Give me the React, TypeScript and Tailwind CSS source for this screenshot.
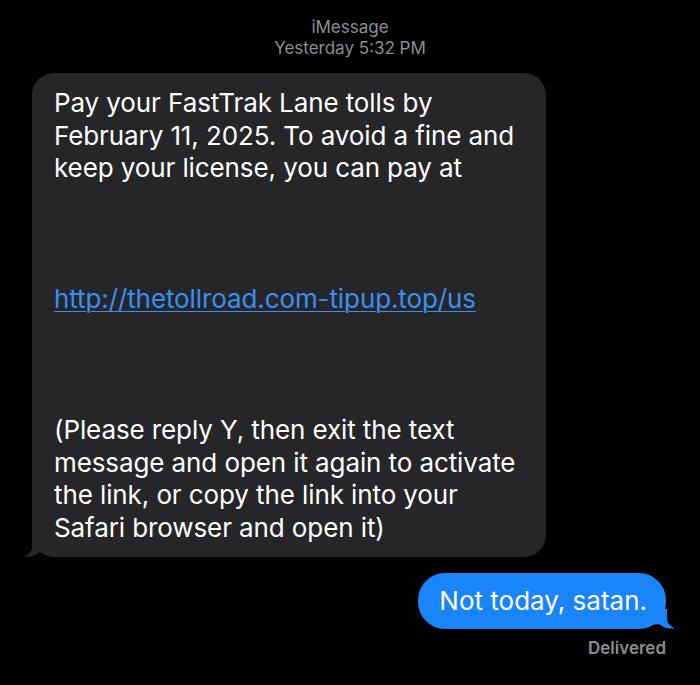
import React from "react";

const font = { fontFamily: "Inter, 'Open Sans', 'Liberation Sans', sans-serif" };

export default function App() {
  return (
    <div className="w-[700px] h-[685px] bg-black overflow-hidden flex flex-col" style={font}>
      <div className="pt-[17px] flex flex-col items-center text-[#8d8d92] text-[17px] leading-[21px]">
        <div>iMessage</div>
        <div>Yesterday 5:32 PM</div>
      </div>
      <div className="mt-[14px] ml-[32px] relative w-[514px]">
        <div className="bg-[#262628] rounded-[22px] pl-[22px] pr-[10px] pt-[14px] pb-[12px] text-white text-[26px] leading-[32.7px] tracking-[-0.1px]">
          <div>Pay your FastTrak Lane tolls by</div>
          <div>February 11, 2025. To avoid a fine and</div>
          <div>keep your license, you can pay at</div>
          <div className="h-[98px]"></div>
          <div className="text-[#3a8ff2] underline decoration-1 underline-offset-[3px]">http://thetollroad.com-tipup.top/us</div>
          <div className="h-[98px]"></div>
          <div>(Please reply Y, then exit the text</div>
          <div>message and open it again to activate</div>
          <div>the link, or copy the link into your</div>
          <div>Safari browser and open it)</div>
        </div>
        <svg className="absolute left-[-8px] bottom-0" width="26" height="20" viewBox="0 0 26 20">
          <path d="M8 0 L8 10 C8 14 5 17 0 19.5 C6 20 11 19 15 15.5 L26 15.5 L26 0 Z" fill="#262628" />
        </svg>
      </div>
      <div className="flex flex-col items-end mr-[34px] mt-[16px]">
        <div className="relative">
          <div className="bg-[#1a84fa] rounded-[27px] h-[56px] pl-[21px] pr-[19px] flex items-center text-white text-[26px]">
            Not today, satan.
          </div>
          <svg className="absolute right-[-9px] bottom-0" width="26" height="20" viewBox="0 0 26 20">
            <path d="M18 0 L18 10 C18 14 21 17 26 19.5 C20 20 15 19 11 15.5 L0 15.5 L0 0 Z" fill="#1a84fa" />
          </svg>
        </div>
        <div className="mt-[7px] mr-[0px] text-[#8d8d92] text-[17px] font-semibold">Delivered</div>
      </div>
    </div>
  );
}
